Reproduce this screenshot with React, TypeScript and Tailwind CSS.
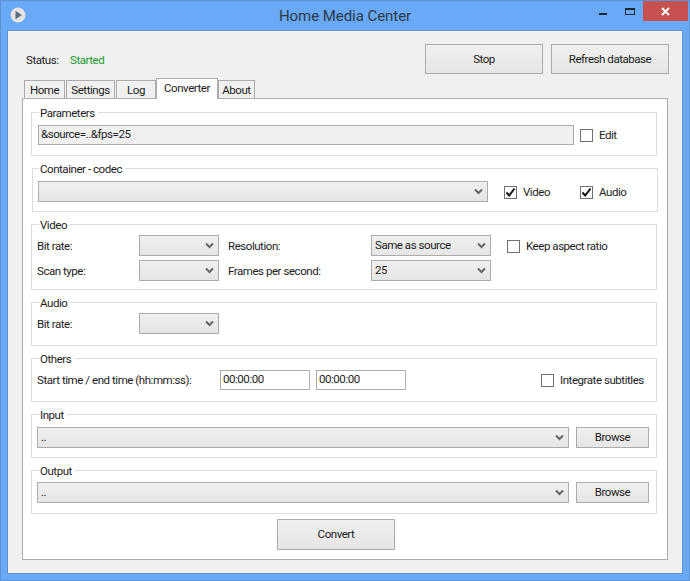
import React from "react";

const Chevron = () => (
  <svg width="9" height="7" viewBox="0 0 9 7" className="shrink-0">
    <path d="M1 1.5 L4.5 5 L8 1.5" fill="none" stroke="#666" strokeWidth="2" />
  </svg>
);

function Combo({ w, text, cls = "" }: { w: string; text?: string; cls?: string }) {
  return (
    <div className={`${w} ${cls} h-[21px] shrink-0 border border-[#acacac] bg-gradient-to-b from-[#f0f0f0] to-[#e5e5e5] flex items-center justify-between pl-[3px] pr-[4px]`}>
      <span className="truncate pt-[1px]">{text}</span>
      <Chevron />
    </div>
  );
}

function Check({ checked, label, cls = "" }: { checked?: boolean; label: string; cls?: string }) {
  return (
    <div className={`flex items-center gap-[6px] shrink-0 ${cls}`}>
      <div className="w-[13px] h-[13px] border border-[#707070] bg-white flex items-center justify-center">
        {checked && (
          <svg width="11" height="11" viewBox="0 0 11 11">
            <path d="M1.5 5.5 L4.2 8.5 L9.5 1.5" fill="none" stroke="#111" strokeWidth="2" />
          </svg>
        )}
      </div>
      <span className="pt-[1px]">{label}</span>
    </div>
  );
}

function Group({ title, h, children, cls = "", tl = "left-[7px]" }: { title: string; h: string; children: React.ReactNode; cls?: string; tl?: string }) {
  return (
    <div className={`relative ${h} ${cls} shrink-0 border border-[#dcdcdc]`}>
      <span className={`absolute -top-[8px] ${tl} bg-white pl-[1px] pr-[3px] leading-[16px]`}>{title}</span>
      {children}
    </div>
  );
}

function Button({ w, h, label }: { w: string; h: string; label: string }) {
  return (
    <div className={`${w} ${h} shrink-0 border border-[#acacac] bg-gradient-to-b from-[#f0f0f0] to-[#e5e5e5] flex items-center justify-center pt-[1px]`}>
      {label}
    </div>
  );
}

function Tab({ w, label, active }: { w: string; label: string; active?: boolean }) {
  return (
    <div
      className={
        active
          ? `${w} h-[21px] -mb-px relative bg-white border border-b-0 border-[#acacac] flex items-start justify-center pt-[1px]`
          : `${w} h-[18px] bg-[#f0f0f0] border border-b-0 border-[#acacac] flex items-center justify-center pt-[2px]`
      }
    >
      {label}
    </div>
  );
}

export default function App() {
  return (
    <div
      className="w-[690px] h-[581px] bg-[#6aa9f5] border border-[#5b93d3] px-[6px] flex flex-col text-[11.5px] tracking-[-0.45px] text-[#1c1c1c] overflow-hidden"
      style={{ fontFamily: "Roboto, 'Liberation Sans', sans-serif" }}
    >
      <div className="h-[29px] shrink-0 relative flex items-start justify-center">
        <div className="absolute left-[3px] top-[6px]">
          <svg width="16" height="16" viewBox="0 0 16 16">
            <circle cx="8" cy="8" r="7.5" fill="#e4e4e4" />
            <path d="M5.5 3.8 L12 8 L5.5 12.2 Z" fill="#5d6f7e" />
          </svg>
        </div>
        <span className="text-[15px] tracking-[-0.05px] leading-[30px] text-[#2b3a48]">Home Media Center</span>
        <div className="absolute right-[-5px] top-0 flex items-start">
          <div className="w-[8px] h-[2px] bg-[#1f2a36] mt-[12px] mr-[18px]" />
          <div className="w-[10px] h-[7px] border border-t-2 border-[#1f2a36] mt-[7px] mr-[8px]" />
          <div className="w-[45px] h-[20px] bg-[#c75050] flex items-center justify-center">
            <svg width="9" height="9" viewBox="0 0 9 9">
              <path d="M1 1 L8 8 M8 1 L1 8" stroke="#fff" strokeWidth="2" />
            </svg>
          </div>
        </div>
      </div>

      <div className="w-[676px] h-[544px] shrink-0 bg-[#f0f0f0] border border-[#5b93d3] flex flex-col">
        <div className="pt-[13px] pl-[18px] pr-[13px] flex items-center h-[43px] shrink-0">
          <span className="w-[44px] pt-[4px]">Status:</span>
          <span className="text-[#169b2c] pt-[4px]">Started</span>
          <div className="ml-auto flex gap-[8px]">
            <Button w="w-[118px]" h="h-[30px]" label="Stop" />
            <Button w="w-[118px]" h="h-[30px]" label="Refresh database" />
          </div>
        </div>

        <div className="ml-[16px] mt-[4px] h-[20px] flex items-end shrink-0">
          <Tab w="w-[41px]" label="Home" />
          <div className="w-px" />
          <Tab w="w-[49px]" label="Settings" />
          <div className="w-px" />
          <Tab w="w-[40px]" label="Log" />
          <Tab w="w-[62px]" label="Converter" active />
          <Tab w="w-[37px]" label="About" />
        </div>

        <div className="ml-[14px] w-[646px] h-[462px] shrink-0 bg-white border border-[#acacac] pl-[8px] pt-[13px] flex flex-col gap-[12px]">
          <Group title="Parameters" h="h-[44px]" cls="w-[626px]">
            <div className="flex items-center pl-[6px] pt-[12px]">
              <div className="w-[536px] h-[20px] border border-[#acacac] bg-[#f0f0f0] flex items-center pl-[2px]">&amp;source=..&amp;fps=25</div>
              <Check label="Edit" cls="ml-[6px]" />
            </div>
          </Group>

          <Group title="Container - codec" h="h-[44px]" cls="w-[626px] ml-px" tl="left-[6px]">
            <div className="flex items-center pl-[5px] pt-[12px]">
              <Combo w="w-[450px]" />
              <Check checked label="Video" cls="ml-[16px] w-[76px] mt-[1px]" />
              <Check checked label="Audio" cls="mt-[1px]" />
            </div>
          </Group>

          <Group title="Video" h="h-[66px]" cls="w-[626px]">
            <div className="pl-[5px] pt-[10px] flex flex-col gap-[4px]">
              <div className="flex items-center">
                <span className="w-[102px] pt-[3px]">Bit rate:</span>
                <Combo w="w-[80px]" />
                <span className="w-[152px] pl-[9px] shrink-0 pt-[3px]">Resolution:</span>
                <Combo w="w-[120px]" text="Same as source" />
                <Check label="Keep aspect ratio" cls="ml-[16px] mt-[1px]" />
              </div>
              <div className="flex items-center">
                <span className="w-[102px] pt-[2px]">Scan type:</span>
                <Combo w="w-[80px]" />
                <span className="w-[152px] pl-[9px] shrink-0 pt-[2px]">Frames per second:</span>
                <Combo w="w-[120px]" text="25" />
              </div>
            </div>
          </Group>

          <Group title="Audio" h="h-[44px]" cls="w-[626px]">
            <div className="flex items-center pl-[5px] pt-[10px]">
              <span className="w-[102px] pt-[3px]">Bit rate:</span>
              <Combo w="w-[80px]" />
            </div>
          </Group>

          <Group title="Others" h="h-[44px]" cls="w-[626px]">
            <div className="flex items-center pl-[5px] pt-[11px]">
              <span className="w-[183px] pt-[1px]">Start time / end time (hh:mm:ss):</span>
              <div className="w-[90px] h-[20px] border border-[#acacac] bg-white flex items-center pl-[2px]">00:00:00</div>
              <div className="w-[90px] h-[20px] ml-[6px] border border-[#acacac] bg-white flex items-center pl-[2px]">00:00:00</div>
              <Check label="Integrate subtitles" cls="ml-[135px]" />
            </div>
          </Group>

          <Group title="Input" h="h-[44px]" cls="w-[626px]">
            <div className="flex items-center pl-[5px] pt-[12px]">
              <Combo w="w-[532px]" text=".." />
              <div className="ml-[7px]"><Button w="w-[73px]" h="h-[21px]" label="Browse" /></div>
            </div>
          </Group>

          <Group title="Output" h="h-[44px]" cls="w-[626px]">
            <div className="flex items-center pl-[5px] pt-[11px]">
              <Combo w="w-[532px]" text=".." />
              <div className="ml-[7px]"><Button w="w-[73px]" h="h-[21px]" label="Browse" /></div>
            </div>
          </Group>

          <div className="-mt-[7px] ml-[246px]">
            <Button w="w-[118px]" h="h-[31px]" label="Convert" />
          </div>
        </div>
      </div>
    </div>
  );
}
